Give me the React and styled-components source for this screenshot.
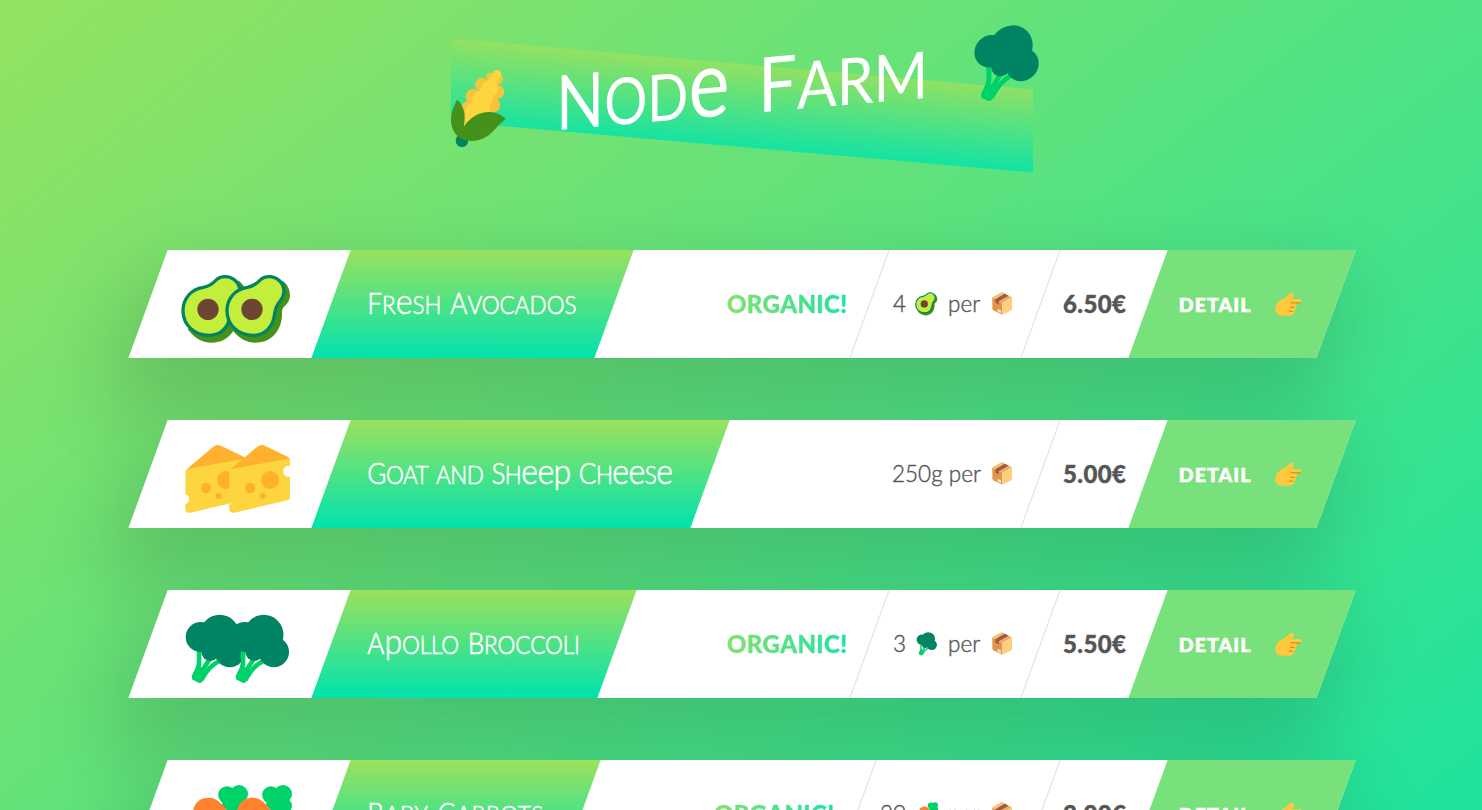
import React from 'react';
import styled, { createGlobalStyle } from 'styled-components';

const GlobalStyle = createGlobalStyle`
  *, *::before, *::after { box-sizing: border-box; margin: 0; padding: 0; }
  body {
    margin: 0;
    font-family: Lato, "Liberation Sans", sans-serif;
    font-weight: 300;
    color: #555;
  }
`;

const Page = styled.div`
  height: 810px;
  overflow: hidden;
  background: linear-gradient(to bottom right, #94e261, #0ae3a8) 0 0 / 100% 1163px no-repeat;
`;

const Container = styled.div`
  width: 1188px;
  margin: 0 auto 0 148px;
`;

const Header = styled.header`
  position: relative;
  z-index: 0;
  display: flex;
  align-items: flex-start;
  height: 250px;
  padding-left: 302px;
`;

const Banner = styled.div`
  position: absolute;
  z-index: -1;
  left: 303px;
  top: 64.2px;
  width: 582px;
  height: 83px;
  opacity: 0.8;
  transform: skewY(5deg);
  background: linear-gradient(to bottom, #9be15d, #00e3ae);
`;

const CornIcon = styled.svg`
  flex: none;
  width: 57px;
  height: 79px;
  margin-top: 69px;
`;

const HeaderBroccoli = styled.svg`
  flex: none;
  width: 76px;
  height: 78px;
  margin-top: 23px;
  margin-left: 40px;
  transform: skewY(-5deg);
`;

const Title = styled.h1`
  flex: none;
  display: flex;
  width: 370px;
  margin-left: 49px;
  margin-top: 35px;
  line-height: 100px;
  font-size: 76px;
  font-weight: 400;
  white-space: nowrap;
  color: #fff;
  transform: skewY(-5deg);
`;

const Word = styled.span`
  flex: none;
  width: ${(p) => p.$width}px;
  transform: scaleX(${(p) => p.$scale});
  transform-origin: left center;
`;

const Capital = styled.span``;

const Small = styled.span`
  font-size: 1.23em;
  line-height: 0;
  font-variant-caps: ${(p) => (p.$round ? 'normal' : 'small-caps')};
`;

const Card = styled.article`
  display: flex;
  height: 108px;
  margin-bottom: 62px;
  background: #fff;
  box-shadow: 0 37.5px 75px 12.5px rgba(0, 0, 0, 0.15);
  transform: skewX(-20deg);
`;

const EmojiBox = styled.div`
  flex: none;
  display: flex;
  align-items: flex-start;
  width: 183px;
  padding: 22px 0 0 29.5px;
  transform: skewX(20deg);
`;

const BigEmoji = styled.svg`
  flex: none;
  width: 70px;
  height: 72px;
  & + & { margin-left: -25.5px; }
`;

const TitleBox = styled.div`
  flex: none;
  display: flex;
  align-items: center;
  width: ${(p) => p.$width}px;
  margin-right: auto;
  padding: 0 0 2px 36px;
  background: linear-gradient(to bottom, #9be15d, #00e3ae);
`;

const Name = styled.h2`
  width: 0;
  font-size: 29px;
  line-height: 40px;
  font-weight: 300;
  white-space: nowrap;
  color: #fff;
  -webkit-text-stroke: 0.6px #fff;
  letter-spacing: ${(p) => p.$spacing}px;
  transform: skewX(20deg) scaleX(0.9);
  transform-origin: left center;
`;

const DetailBox = styled.div`
  flex: none;
  display: flex;
  align-items: center;
  justify-content: flex-end;
  width: ${(p) => p.$width}px;
  padding-right: ${(p) => p.$right}px;
  border-right: ${(p) => (p.$last ? 'none' : '1px solid #ddd')};
`;

const Detail = styled.div`
  display: flex;
  align-items: center;
  font-size: 22.5px;
  line-height: 30px;
  white-space: pre;
  -webkit-text-stroke: 0.4px #555;
  transform: skewX(20deg);
`;

const Organic = styled(Detail)`
  font-weight: 900;
  font-size: 24px;
  letter-spacing: 0.4px;
  color: transparent;
  -webkit-text-stroke: 0.4px transparent;
  background: linear-gradient(to right, #84e16b, #1be4a4);
  background-clip: text;
  -webkit-background-clip: text;
`;

const Price = styled(Detail)`
  font-weight: 900;
  font-size: 24px;
  letter-spacing: 0.4px;
`;

const SmallEmoji = styled.svg`
  flex: none;
  width: 24px;
  height: 25px;
  margin: 0 10px 2px 8px;
`;

const Package = styled.svg`
  flex: none;
  width: 20px;
  height: 23px;
  margin: 0 0 2px 11.5px;
`;

const Link = styled.a`
  flex: none;
  display: flex;
  align-items: center;
  width: 188px;
  padding-left: 31px;
  background: #79e17b;
  color: #fff;
  text-decoration: none;
`;

const LinkText = styled.span`
  display: flex;
  align-items: center;
  padding-top: 1px;
  font-size: 19.5px;
  line-height: 26px;
  letter-spacing: 1.1px;
  font-weight: 900;
  -webkit-text-stroke: 0.6px #fff;
  transform: skewX(20deg);
`;

const Hand = styled.svg`
  width: 28px;
  height: 24px;
  margin: 0 0 2px 23px;
`;

const Avocado = () => (
  <>
    <path fill="#44911b" d="M488 122C503 133 510 150 510 167C510 180 503 190 492 200C486 206 486 212 486 222C486 270 455 308 407 308C380 308 360 299 335 268Z" />
    <path fill="#c3ef3c" stroke="#008463" strokeWidth="10" d="M447 110C473 110 492 130 492 154C492 166 488 174 480 184C469 196 466 206 464 220C460 258 437 286 400 286C353 286 321 253 321 212C321 177 345 147 382 142C406 138 412 127 423 118C430 112 438 110 447 110Z" />
    <circle cx="396" cy="208" r="32" fill="#6d4534" />
  </>
);

const Cheese = () => (
  <>
    <path fill="#fcd53f" d="M328 186Q328 179 335 177L503 143Q510 142 510 150V168A16.5 16.5 0 1 0 510 200V262Q510 269 503 271L343 308Q328 310 328 297V282A15 15 0 0 0 328 253Z" />
    <path fill="#ffb02e" d="M332 178L412 110Q424 101 436 108L503 140Q511 144 503 146Z" />
    <circle cx="390.500" cy="234" r="15.500" fill="#ffb02e" />
    <circle cx="450" cy="210" r="27" fill="#ffb02e" />
    <circle cx="428" cy="258" r="9" fill="#ffb02e" />
  </>
);

const Broccoli = () => (
  <>
    <g fill="none" stroke="#00d26a" strokeWidth="14">
      <path d="M369 205C370 245 370 258 361 290" />
      <path d="M404 232L368 290" />
      <path d="M434 240C405 256 395 268 376 300" />
    </g>
    <path fill="#00d26a" d="M348 286L363 255L392 270L380 302Q376 311 368 308L352 300Q345 296 348 286Z" />
    <g fill="#008463">
      <circle cx="374" cy="171" r="45" />
      <circle cx="431" cy="164" r="59.500" />
      <circle cx="461.500" cy="216" r="45.500" />
      <circle cx="403" cy="216" r="27" />
    </g>
  </>
);

const Carrot = () => (
  <>
    <path fill="none" stroke="#00d26a" strokeWidth="15" d="M430 190L480 140M438 182H495" />
    <g fill="#00d26a">
      <circle cx="453" cy="135" r="26.500" />
      <circle cx="489" cy="132" r="27" />
      <circle cx="494" cy="167" r="22" />
      <path d="M440 150L480 130L490 180L462 177L452 173L446 177L438 167Z" />
    </g>
    <path fill="#ff822d" d="M351 184C355 158 373 143 397 143C410 143 420 147 431 157L452 178C465 195 463 222 442 234L355 299Q327 312 332 286Z" />
  </>
);

const EMOJI = { avocado: Avocado, cheese: Cheese, broccoli: Broccoli, carrot: Carrot };
const EMOJI_BOX = '306 96 210 216';

const Box = () => (
  <Package viewBox="0 0 60 68">
    <path fill="#f3ad61" d="M30 0L60 16L30 33L1 16Z" />
    <path fill="#e19747" d="M1 16L31 33V68L4 54Q1 52 1 48Z" />
    <path fill="#ffce7c" d="M31 33L60 16V49Q60 53 57 55L31 68Z" />
    <path fill="#fcc06d" d="M30 0L44 8L13 23L1 16Z" />
    <path fill="#9b5a4b" d="M38 5L50 11L20 27V37L10 31V21Z" />
    <path fill="#e6e6e6" d="M17 50L27 55V63L17 58Z" />
  </Package>
);

const PointingHand = () => (
  <Hand viewBox="796 156 84 72">
    <path fill="#ffc83d" d="M798 205C799 190 811 180 826 174L842 160Q850 156 853 162Q855 168 849 174L846 177H872Q877 178 876 184Q875 190 869 190H861Q865 196 858 201Q862 207 855 212Q855 225 839 227H817C803 225 796 217 798 205Z" />
    <path fill="none" stroke="#d67d00" strokeWidth="3" strokeLinecap="round" d="M845 188.500L872 188.500M844 202H854M840 213.500H849" />
  </Hand>
);

const Corn = () => (
  <CornIcon viewBox="30 147 171 237">
    <g fill="#f9c23c">
      <circle cx="151" cy="170" r="12" />
      <circle cx="172" cy="177" r="17" />
      <circle cx="126" cy="194" r="21" />
      <circle cx="172" cy="216" r="21" />
      <circle cx="99" cy="229" r="22" />
      <circle cx="159" cy="255" r="22" />
      <circle cx="83" cy="265" r="21" />
    </g>
    <g fill="#fcd53f">
      <circle cx="171" cy="163" r="13" />
      <circle cx="162" cy="179" r="14" />
      <ellipse cx="148" cy="206" rx="26" ry="25" />
      <ellipse cx="128" cy="235" rx="32" ry="26" />
      <circle cx="105" cy="275" r="29" />
      <circle cx="130" cy="265" r="22" />
      <circle cx="84" cy="302" r="20" />
    </g>
    <circle cx="66" cy="362" r="19" fill="#008463" />
    <path fill="#44911b" d="M51 239C69 252 80 282 71 320C92 290 120 275 150 276Q182 279 197 297C165 320 150 362 95 363C55 363 33 335 33 298C33 275 43 258 51 239Z" />
  </CornIcon>
);

/* Display lettering: tall capitals, slightly lower small capitals, and a round e and p. */
const Lettering = ({ children }) =>
  children.match(/[A-Z]+|[ep]+|[^A-Zep]+/g).map((run, i) =>
    /[A-Z]/.test(run)
      ? <Capital key={i}>{run}</Capital>
      : <Small key={i} $round={/[ep]/.test(run)}>{run}</Small>
  );

const products = [
  { name: 'Fresh Avocados', emoji: 'avocado', quantity: '4', price: '6.50€', organic: true, box: 283, spacing: 0, unit: 171 },
  { name: 'Goat and Sheep Cheese', emoji: 'cheese', quantity: '250g', plain: true, price: '5.00€', box: 379, spacing: -0.63, unit: 171 },
  { name: 'Apollo Broccoli', emoji: 'broccoli', quantity: '3', price: '5.50€', organic: true, box: 286, spacing: -0.1, unit: 171 },
  { name: 'Baby Carrots', emoji: 'carrot', quantity: '20', price: '3.00€', organic: true, box: 250, spacing: 0.75, unit: 184 },
];

const ProductCard = ({ product }) => {
  const Art = EMOJI[product.emoji];
  return (
    <Card>
      <EmojiBox>
        <BigEmoji viewBox={EMOJI_BOX}><Art /></BigEmoji>
        <BigEmoji viewBox={EMOJI_BOX}><Art /></BigEmoji>
      </EmojiBox>
      <TitleBox $width={product.box}>
        <Name $spacing={product.spacing}><Lettering>{product.name}</Lettering></Name>
      </TitleBox>
      {product.organic && (
        <DetailBox $width={160} $right={21}><Organic>ORGANIC!</Organic></DetailBox>
      )}
      <DetailBox $width={product.unit} $right={28}>
        <Detail>
          {product.quantity}
          {product.plain ? ' ' : <SmallEmoji viewBox={EMOJI_BOX}><Art /></SmallEmoji>}
          per
          <Box />
        </Detail>
      </DetailBox>
      <DetailBox $width={107} $right={21.7} $last><Price>{product.price}</Price></DetailBox>
      <Link href="#">
        <LinkText>DETAIL<PointingHand /></LinkText>
      </Link>
    </Card>
  );
};

export default function App() {
  return (
    <Page>
      <GlobalStyle />
      <Container>
        <Header>
          <Banner />
          <Corn />
          <Title>
            <Word $width={202} $scale={0.83}><Lettering>Node</Lettering></Word>{' '}
            <Word $width={168} $scale={0.905}><Lettering>Farm</Lettering></Word>
          </Title>
          <HeaderBroccoli viewBox={EMOJI_BOX}><Broccoli /></HeaderBroccoli>
        </Header>
        {products.map((product) => <ProductCard key={product.name} product={product} />)}
      </Container>
    </Page>
  );
}
